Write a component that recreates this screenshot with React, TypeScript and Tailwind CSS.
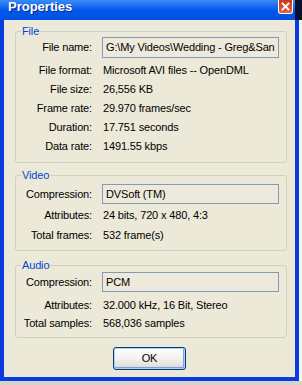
import React from "react";

type Row = { label: string; value: string };

const font = "font-['Liberation_Sans',Arial,sans-serif]";

const fileRows: Row[] = [
  { label: "File format:", value: "Microsoft AVI files -- OpenDML" },
  { label: "File size:", value: "26,556 KB" },
  { label: "Frame rate:", value: "29.970 frames/sec" },
  { label: "Duration:", value: "17.751 seconds" },
  { label: "Data rate:", value: "1491.55 kbps" },
];

const TextBox = ({ text, tall }: { text: string; tall?: boolean }) => (
  <div
    className={`ml-[10px] w-[177px] ${
      tall ? "h-[21px]" : "h-[20px]"
    } border border-[#7F9DB9] bg-[#EDEADB] pl-[3px] flex items-center overflow-hidden whitespace-nowrap`}
  >
    {text}
  </div>
);

const InfoRow = ({ label, value, h }: { label: string; value: string; h: string }) => (
  <div className={`flex items-center ${h}`}>
    <span className="w-[76px] text-right whitespace-nowrap">{label}</span>
    <span className="ml-[11px] whitespace-nowrap">{value}</span>
  </div>
);

const Group = ({
  title,
  className,
  children,
}: {
  title: string;
  className: string;
  children: React.ReactNode;
}) => (
  <fieldset
    className={`ml-[11px] w-[272px] rounded-[3px] border border-[#D0D0BF] ${className}`}
  >
    <legend className="ml-[5px] px-[1px] leading-[12px] text-[#0046D5]">{title}</legend>
    {children}
  </fieldset>
);

export default function App() {
  return (
    <div className={`w-[302px] h-[385px] flex flex-col bg-[#D6D3CE] text-[11px] tracking-[-0.15px] text-black ${font}`}>
      <div className="flex h-[381px]">
        {/* window */}
        <div className="w-[299px] flex flex-col">
          <div className="flex h-[20px]">
            <div className="w-[295px] flex justify-between items-start pl-[8px] pr-[2px] bg-linear-to-b from-[#3A8BF6] via-[#0158EC] to-[#0050E2]">
              <span className="text-[13px] leading-[14px] font-bold tracking-normal text-white [text-shadow:1px_1px_0_#0C2A93]">
                Properties
              </span>
              <div className="w-[15px] h-[14px] rounded-b-[3px] border border-t-0 border-white bg-linear-to-b from-[#C9391C] to-[#E5613C] flex items-center justify-center">
                <svg width="9" height="9" viewBox="0 0 9 9">
                  <path d="M1.5 1.5 L7.5 7.5 M7.5 1.5 L1.5 7.5" stroke="white" strokeWidth="1.8" strokeLinecap="square" />
                </svg>
              </div>
            </div>
            <div className="w-[4px] bg-[#0B0F2E]" />
          </div>

          <div className="flex-1 flex flex-col bg-[#ECE9D8] border-l-4 border-r-4 border-b-4 border-[#0A3BE0]">
            <Group title="File" className="mt-[5px] pb-[6px]">
              <div className="flex items-center h-[21px]">
                <span className="w-[76px] text-right">File name:</span>
                <TextBox text="G:\My Videos\Wedding - Greg&San" tall />
              </div>
              <div className="mt-[3px] flex flex-col">
                {fileRows.map((r) => (
                  <InfoRow key={r.label} label={r.label} value={r.value} h="h-[19px]" />
                ))}
              </div>
            </Group>

            <Group title="Video" className="mt-[6px] pb-[5px]">
              <div className="mt-[3px] flex items-center h-[20px]">
                <span className="w-[76px] text-right">Compression:</span>
                <TextBox text="DVSoft (TM)" />
              </div>
              <div className="mt-[1px] flex flex-col">
                <InfoRow label="Attributes:" value="24 bits, 720 x 480, 4:3" h="h-[20px]" />
                <InfoRow label="Total frames:" value="532 frame(s)" h="h-[20px]" />
              </div>
            </Group>

            <Group title="Audio" className="mt-[8px] pb-[5px]">
              <div className="mt-[1px] flex items-center h-[20px]">
                <span className="w-[76px] text-right">Compression:</span>
                <TextBox text="PCM" />
              </div>
              <div className="mt-[4px] flex flex-col">
                <InfoRow label="Attributes:" value="32.000 kHz, 16 Bit, Stereo" h="h-[18px]" />
                <InfoRow label="Total samples:" value="568,036 samples" h="h-[18px]" />
              </div>
            </Group>

            <div className="mt-[9px] flex justify-center">
              <button className="w-[73px] h-[23px] rounded-[3px] border border-[#003C74] bg-linear-to-b from-[#FFFFFF] via-[#F3F2EE] to-[#DCD8CE] shadow-[inset_0_0_0_1px_#B9D0F5,inset_-1px_-1px_0_1px_#7D9BE6] text-[11px] text-black">
                OK
              </button>
            </div>
          </div>
        </div>
        {/* desktop behind */}
        <div className="w-[3px] flex flex-col">
          <div className="h-[20px] bg-[#0B0F2E]" />
          <div className="flex-1 bg-[#F4F4F4]" />
        </div>
      </div>
    </div>
  );
}
